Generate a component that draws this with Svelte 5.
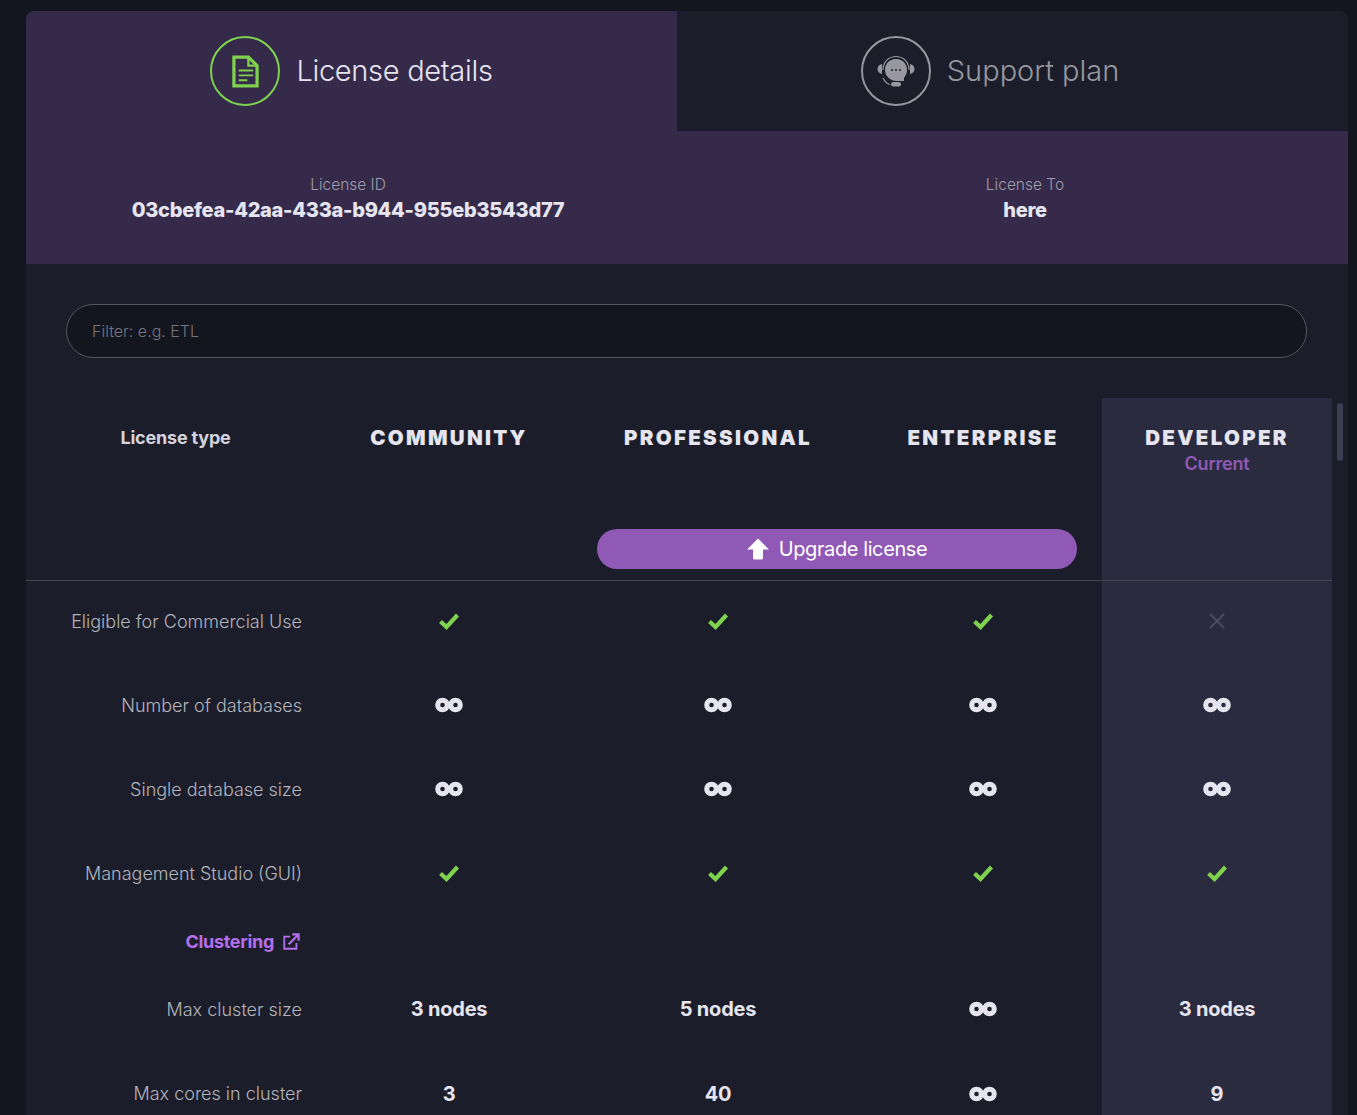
<script>
	const tiers = ['COMMUNITY', 'PROFESSIONAL', 'ENTERPRISE', 'DEVELOPER'];

	// each value: 'yes' | 'no' | 'inf' | plain text
	const rows = [
		{ label: 'Eligible for Commercial Use', values: ['yes', 'yes', 'yes', 'no'] },
		{ label: 'Number of databases', values: ['inf', 'inf', 'inf', 'inf'] },
		{ label: 'Single database size', values: ['inf', 'inf', 'inf', 'inf'] },
		{ label: 'Management Studio (GUI)', values: ['yes', 'yes', 'yes', 'yes'] },
		{ section: 'Clustering' },
		{ label: 'Max cluster size', values: ['3 nodes', '5 nodes', 'inf', '3 nodes'] },
		{ label: 'Max cores in cluster', values: ['3', '40', 'inf', '9'] }
	];
</script>

{#snippet cellValue(value)}
	{#if value === 'yes'}
		<svg class="check" viewBox="0 0 22 18" aria-label="yes">
			<path d="M2.5 9.5 L8.5 15 L19.5 3" fill="none" stroke="currentColor" stroke-width="4.2" />
		</svg>
	{:else if value === 'no'}
		<svg class="cross" viewBox="0 0 18 18" aria-label="no">
			<path d="M2 2 L16 16 M16 2 L2 16" fill="none" stroke="currentColor" stroke-width="1.8" />
		</svg>
	{:else if value === 'inf'}
		<svg class="inf" viewBox="0 0 28 16" aria-label="unlimited">
			<circle cx="7.5" cy="8" r="4.8" fill="none" stroke="currentColor" stroke-width="5" />
			<circle cx="20.5" cy="8" r="4.8" fill="none" stroke="currentColor" stroke-width="5" />
		</svg>
	{:else}
		<span class="strong">{value}</span>
	{/if}
{/snippet}

<div class="panel">
	<div class="tabs">
		<div class="tab active">
			<div class="ring">
				<svg class="doc" viewBox="0 0 28 34">
					<path d="M2 2 H17 L26 11 V32 H2 Z" fill="none" stroke="currentColor" stroke-width="3.4" />
					<path d="M17 2 V11 H26" fill="none" stroke="currentColor" stroke-width="2.4" />
					<path d="M7 16 H22 M7 21 H22 M7 26 H16" fill="none" stroke="currentColor" stroke-width="2" />
				</svg>
			</div>
			<span class="tab-title">License details</span>
		</div>
		<div class="tab">
			<div class="ring">
				<svg class="headset" viewBox="0 0 40 34">
					<path d="M7 16 C7 -2 33 -2 33 16" fill="none" stroke="currentColor" stroke-width="1.2" />
					<path d="M6 10 V20 C0 19 0 11 6 10 Z M34 10 V20 C40 19 40 11 34 10 Z" fill="currentColor" />
					<path d="M20 5 C27 5 31 10 31 16 C31 20 29 22 28 24 V27 H21 C14 27 9 22 9 16 C9 10 13 5 20 5 Z" fill="currentColor" />
					<circle cx="16" cy="16" r="1" fill="#1b1e2a" />
					<circle cx="20" cy="16" r="1" fill="#1b1e2a" />
					<circle cx="24" cy="16" r="1" fill="#1b1e2a" />
					<path d="M7 24 C9 28 11 30 14 30.5" fill="none" stroke="currentColor" stroke-width="1.2" />
					<rect x="15" y="28" width="10" height="4.5" rx="2.2" fill="currentColor" />
				</svg>
			</div>
			<span class="tab-title support">Support plan</span>
		</div>
	</div>

	<div class="details">
		<div class="detail">
			<div class="caption">License ID</div>
			<div class="value">03cbefea-42aa-433a-b944-955eb3543d77</div>
		</div>
		<div class="detail">
			<div class="caption">License To</div>
			<div class="value">here</div>
		</div>
	</div>

	<div class="filter">
		<input type="text" placeholder="Filter: e.g. ETL" />
	</div>

	<div class="table-area">
		<div class="table">
			<div class="head first">License type</div>
			{#each tiers as tier, i}
				<div class="head tier" class:dev={i === 3}>
					<div class="tier-name">{tier}</div>
					{#if i === 3}
						<div class="current">Current</div>
					{/if}
				</div>
			{/each}

			<div class="action"></div>
			<div class="action"></div>
			<div class="action wide">
				<button class="upgrade">
					<svg viewBox="0 0 22 22">
						<path d="M11 0.5 L22 11.5 H16 V20 Q16 21.5 14.5 21.5 H7.5 Q6 21.5 6 20 V11.5 H0 Z" fill="currentColor" />
					</svg>
					Upgrade license
				</button>
			</div>
			<div class="action dev"></div>

			{#each rows as row}
				{#if row.section}
					<div class="cell section">
						<span>{row.section}</span>
						<svg viewBox="0 0 20 20">
							<path d="M9 4 H2.5 V17.5 H16 V11" fill="none" stroke="currentColor" stroke-width="2" />
							<path d="M7.5 12.5 L17 3 M11.5 1.5 H18.5 V8.5" fill="none" stroke="currentColor" stroke-width="2.4" />
						</svg>
					</div>
					<div class="cell"></div>
					<div class="cell"></div>
					<div class="cell"></div>
					<div class="cell dev"></div>
				{:else}
					<div class="cell label">{row.label}</div>
					{#each row.values as value, i}
						<div class="cell center" class:dev={i === 3}>
							{@render cellValue(value)}
						</div>
					{/each}
				{/if}
			{/each}
		</div>
		<div class="scroll-thumb"></div>
	</div>
</div>

<style>
	:global(body) {
		background: #13151f;
		overflow: hidden;
	}
	.panel {
		height: 1104px;
		overflow: hidden;
		margin: 11px 9px 0 26px;
		background: #1b1e2a;
		border-radius: 8px 8px 0 0;
		font-family: Inter, 'Liberation Sans', sans-serif;
		color: #e6e5ef;
	}
	.tabs {
		display: flex;
		height: 120px;
	}
	.tab {
		flex: 0 0 651px;
		box-sizing: border-box;
		display: flex;
		align-items: center;
		justify-content: center;
		gap: 16px;
		font-size: 29px;
		font-weight: 300;
		letter-spacing: -0.3px;
		color: #98979f;
	}
	.tab + .tab {
		flex: 1;
		padding-right: 45px;
	}
	.tab.active {
		background: #352a4a;
		color: #e6e5ef;
	}
	.tab-title {
		padding-bottom: 2px;
	}
	.tab-title.support {
		letter-spacing: 0;
	}
	.ring {
		width: 70px;
		height: 70px;
		box-sizing: border-box;
		border: 2px solid #98979f;
		border-radius: 50%;
		display: flex;
		align-items: center;
		justify-content: center;
	}
	.active .ring {
		border-color: #7fd24e;
		color: #7fd24e;
	}
	.doc {
		width: 27px;
		height: 33px;
	}
	.headset {
		width: 40px;
		height: 34px;
	}
	.details {
		display: grid;
		grid-template-columns: 644px 1fr;
		height: 133px;
		background: #352a4a;
		box-sizing: border-box;
		padding-top: 45px;
		text-align: center;
	}
	.detail:last-child {
		padding-left: 32px;
	}
	.caption {
		font-size: 15.5px;
		font-weight: 300;
		line-height: 18px;
		color: #a09daa;
	}
	.value {
		font-size: 20px;
		font-weight: 800;
		line-height: 26px;
		letter-spacing: -0.27px;
		margin-top: 3px;
	}
	.filter {
		padding: 40px 41px 40px 40px;
	}
	.filter input {
		display: block;
		width: 100%;
		height: 54px;
		box-sizing: border-box;
		padding: 0 25px;
		background: #13151f;
		border: 1px solid #55555f;
		border-radius: 27px;
		font: 300 16px Inter, 'Liberation Sans', sans-serif;
		color: #e6e5ef;
	}
	.filter input::placeholder {
		color: #77767f;
		opacity: 1;
	}
	.table-area {
		position: relative;
	}
	.table {
		display: grid;
		grid-template-columns: 300px 246px 292px 238px 230px;
		grid-template-rows: 119px 64px repeat(4, 84.2px) 51.5px repeat(2, 84.2px);
	}
	.head {
		padding-top: 29px;
		line-height: 21px;
		text-align: center;
	}
	.first {
		padding-right: 1px;
		font-size: 18px;
		font-weight: 700;
		letter-spacing: -0.2px;
		color: #d4d3dc;
	}
	.tier-name {
		font-size: 20.5px;
		font-weight: 900;
		letter-spacing: 2.3px;
	}
	.current {
		margin-top: 5px;
		font-size: 18px;
		font-weight: 600;
		letter-spacing: -0.2px;
		color: #9059b6;
	}
	.dev {
		background: #2a2b3e;
	}
	.action {
		border-bottom: 1px solid #45454f;
	}
	.action.wide {
		grid-column: span 2;
		padding: 12px 25px 0;
	}
	.upgrade {
		width: 100%;
		height: 40px;
		border: 0;
		border-radius: 20px;
		background: #9059b6;
		color: #fff;
		font: 400 20px Inter, 'Liberation Sans', sans-serif;
		letter-spacing: -0.4px;
		display: flex;
		align-items: center;
		justify-content: center;
		gap: 10px;
	}
	.upgrade svg {
		width: 22px;
		height: 22px;
	}
	.cell {
		display: flex;
		align-items: center;
		padding-bottom: 4px;
		box-sizing: border-box;
		min-width: 0;
	}
	.label {
		justify-content: flex-end;
		padding-right: 24px;
		padding-bottom: 4px;
		font-size: 18px;
		font-weight: 300;
		color: #b4b3bc;
	}
	.center {
		justify-content: center;
	}
	.section {
		justify-content: flex-end;
		gap: 8px;
		padding-right: 26px;
		font-size: 18px;
		font-weight: 700;
		letter-spacing: -0.3px;
		color: #b56eec;
	}
	.section svg {
		width: 18px;
		height: 18px;
	}
	.check {
		width: 22px;
		height: 18px;
		margin-bottom: 1px;
		color: #7fd24e;
	}
	.cross {
		width: 18px;
		height: 18px;
		color: #4c4c5e;
	}
	.inf {
		width: 28px;
		height: 16px;
	}
	.strong {
		font-size: 20px;
		font-weight: 700;
		letter-spacing: -0.2px;
	}
	.scroll-thumb {
		position: absolute;
		top: 5px;
		left: 1311px;
		width: 6px;
		height: 58px;
		border-radius: 3px;
		background: #3c3e52;
	}
</style>
